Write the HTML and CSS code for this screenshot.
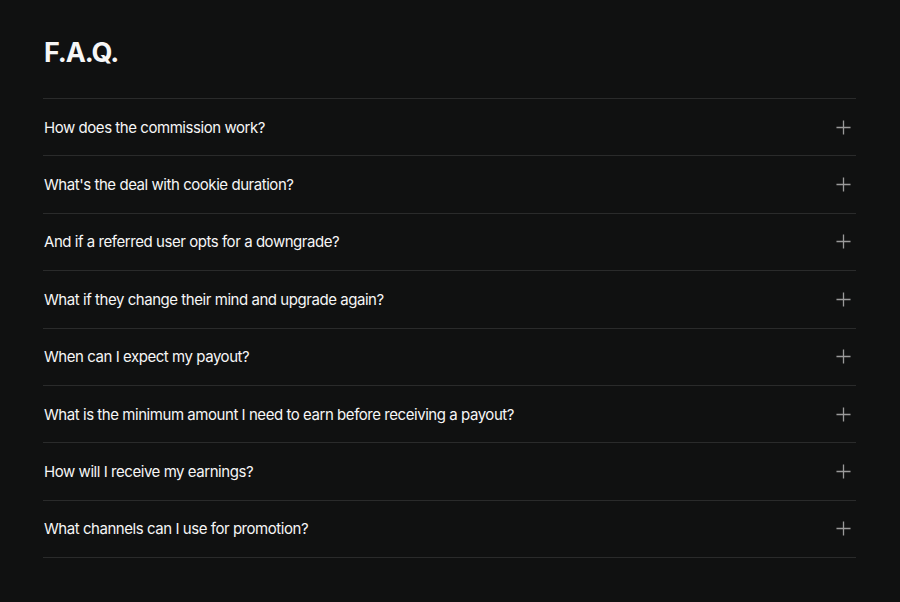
FILE: index.html
```html
<!DOCTYPE html>
<html>
<head>
<meta charset="utf-8">
<link rel="stylesheet" href="styles.css">
</head>
<body>
<main class="faq">
  <h1 class="faq-title">F.A.Q.</h1>
  <ul class="faq-list">
    <li class="faq-item"><span>How does the commission work?</span><svg class="plus" viewBox="0 0 16 16"><path d="M8 0.5V15.5M0.5 8H15.5"/></svg></li>
    <li class="faq-item"><span>What's the deal with cookie duration?</span><svg class="plus" viewBox="0 0 16 16"><path d="M8 0.5V15.5M0.5 8H15.5"/></svg></li>
    <li class="faq-item"><span>And if a referred user opts for a downgrade?</span><svg class="plus" viewBox="0 0 16 16"><path d="M8 0.5V15.5M0.5 8H15.5"/></svg></li>
    <li class="faq-item"><span>What if they change their mind and upgrade again?</span><svg class="plus" viewBox="0 0 16 16"><path d="M8 0.5V15.5M0.5 8H15.5"/></svg></li>
    <li class="faq-item"><span>When can I expect my payout?</span><svg class="plus" viewBox="0 0 16 16"><path d="M8 0.5V15.5M0.5 8H15.5"/></svg></li>
    <li class="faq-item"><span>What is the minimum amount I need to earn before receiving a payout?</span><svg class="plus" viewBox="0 0 16 16"><path d="M8 0.5V15.5M0.5 8H15.5"/></svg></li>
    <li class="faq-item"><span>How will I receive my earnings?</span><svg class="plus" viewBox="0 0 16 16"><path d="M8 0.5V15.5M0.5 8H15.5"/></svg></li>
    <li class="faq-item"><span>What channels can I use for promotion?</span><svg class="plus" viewBox="0 0 16 16"><path d="M8 0.5V15.5M0.5 8H15.5"/></svg></li>
  </ul>
</main>
</body>
</html>
```
FILE: styles.css
```css
html, body {
  margin: 0;
  padding: 0;
  background: #101111;
  height: 100%;
}
body {
  font-family: Inter, "Noto Sans", sans-serif;
  color: #f6f6f6;
}
.faq {
  padding: 36px 44px 0 43px;
}
.faq-title {
  margin: 0 0 0 1px;
  font-size: 27px;
  line-height: 34px;
  font-weight: 700;
  letter-spacing: -1.1px;
  height: 62px;
}
.faq-list {
  list-style: none;
  margin: 0;
  padding: 0;
  border-top: 1px solid #2a2b2b;
}
.faq-item {
  display: flex;
  align-items: center;
  justify-content: space-between;
  height: 56.4px;
  border-bottom: 1px solid #2a2b2b;
  padding: 0 5px 0 1px;
  font-size: 15px;
  font-weight: 420;
  letter-spacing: -0.45px;
}
.plus {
  width: 15px;
  height: 15px;
  fill: none;
  stroke: #9a9a9a;
  stroke-width: 1.4;
}
```
